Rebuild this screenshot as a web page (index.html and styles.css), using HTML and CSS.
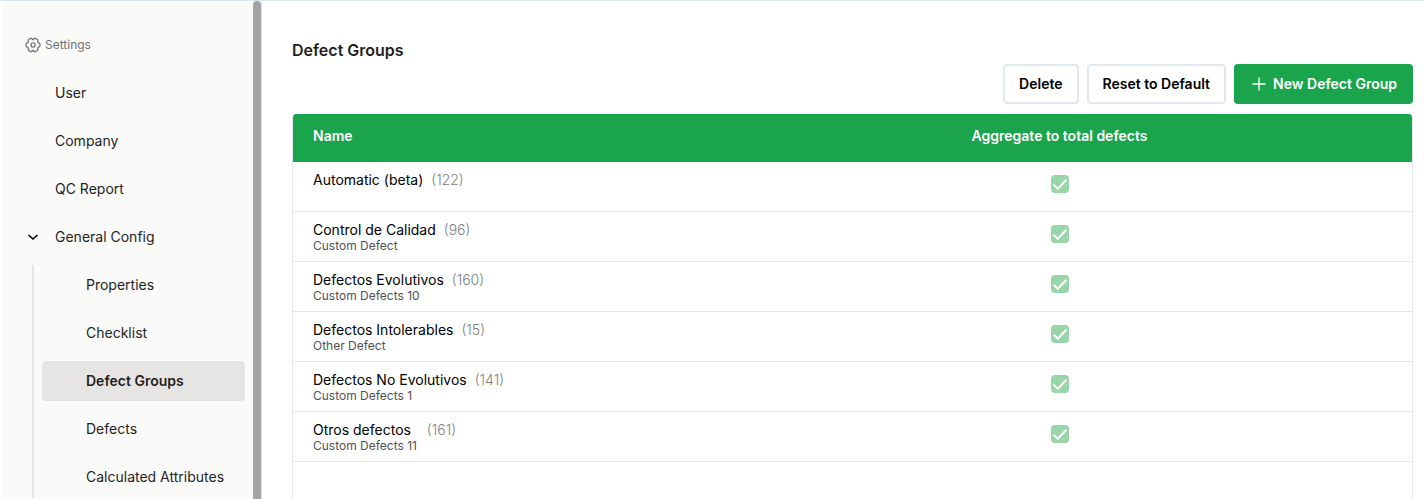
FILE: index.html
```html
<!DOCTYPE html>
<html lang="en">
<head>
<meta charset="utf-8">
<meta name="viewport" content="width=device-width, initial-scale=1">
<title>Defect Groups</title>
<link rel="stylesheet" href="styles.css">
</head>
<body>
<svg class="defs" aria-hidden="true">
  <symbol id="tick" viewBox="0 0 18 18"><path d="M2.600 9.800 6.800 13.800 15.400 4.800" fill="none" stroke="#fff" stroke-width="2"/></symbol>
</svg>
<div class="app">
  <nav class="sidebar" aria-label="Settings">
    <div class="sidebar-content">
      <div class="sidebar-title">
        <svg class="gear" viewBox="0 0 16 16" aria-hidden="true" fill="none" stroke="currentColor" stroke-width="1.3" stroke-linejoin="round">
          <path d="M8 2.700 9.300 1.500Q9.800 1.100 10.400 1.400L12.300 2.500Q12.900 2.900 12.800 3.500L12.700 5.300 14.300 6.200Q14.900 6.500 14.900 7.100V8.900Q14.900 9.500 14.300 9.800L12.700 10.700 12.800 12.500Q12.900 13.100 12.300 13.500L10.400 14.600Q9.800 14.900 9.300 14.500L8 13.300 6.700 14.500Q6.200 14.900 5.600 14.600L3.700 13.500Q3.100 13.100 3.200 12.500L3.300 10.700 1.700 9.800Q1.100 9.500 1.100 8.900V7.100Q1.100 6.500 1.700 6.200L3.300 5.300 3.200 3.500Q3.100 2.900 3.700 2.500L5.600 1.400Q6.200 1.100 6.700 1.500Z"/>
          <circle cx="8" cy="8" r="2.100"/>
        </svg>
        <span>Settings</span>
      </div>
      <ul class="menu">
        <li><a class="item" href="#user">User</a></li>
        <li><a class="item" href="#company">Company</a></li>
        <li><a class="item" href="#qc">QC Report</a></li>
        <li>
          <a class="item parent" href="#general"><svg class="chevron" viewBox="0 0 12 12" aria-hidden="true"><path d="m1.500 4 4.500 4 4.500-4" fill="none" stroke="currentColor" stroke-width="1.600"/></svg>General Config</a>
          <ul class="menu submenu">
            <li><a class="item" href="#properties">Properties</a></li>
            <li><a class="item" href="#checklist">Checklist</a></li>
            <li><a class="item active" href="#groups" aria-current="page">Defect Groups</a></li>
            <li><a class="item" href="#defects">Defects</a></li>
            <li><a class="item" href="#attributes">Calculated Attributes</a></li>
          </ul>
        </li>
      </ul>
    </div>
    <div class="scroll-thumb"></div>
  </nav>
  <main class="main">
    <h1 class="title">Defect Groups</h1>
    <div class="actions">
      <button class="btn" type="button">Delete</button>
      <button class="btn" type="button">Reset to Default</button>
      <button class="btn primary" type="button"><svg class="plus" viewBox="0 0 14 14" aria-hidden="true"><path d="M7 .5v13M.5 7h13" stroke="currentColor" stroke-width="1.300"/></svg>New Defect Group</button>
    </div>
    <div class="panel">
      <table class="groups">
        <thead><tr><th class="name-col" scope="col">Name</th><th class="total-col" scope="col">Aggregate to total defects</th></tr></thead>
        <tbody>
          <tr><td><div class="name">Automatic (beta)<span class="count">(122)</span></div></td><td><label class="check"><input type="checkbox" checked disabled aria-label="Aggregate Automatic (beta)"><svg><use href="#tick"/></svg></label></td></tr>
          <tr><td><div class="name">Control de Calidad<span class="count">(96)</span></div><div class="sub">Custom Defect</div></td><td><label class="check"><input type="checkbox" checked disabled aria-label="Aggregate Control de Calidad"><svg><use href="#tick"/></svg></label></td></tr>
          <tr><td><div class="name">Defectos Evolutivos<span class="count">(160)</span></div><div class="sub">Custom Defects 10</div></td><td><label class="check"><input type="checkbox" checked disabled aria-label="Aggregate Defectos Evolutivos"><svg><use href="#tick"/></svg></label></td></tr>
          <tr><td><div class="name">Defectos Intolerables<span class="count">(15)</span></div><div class="sub">Other Defect</div></td><td><label class="check"><input type="checkbox" checked disabled aria-label="Aggregate Defectos Intolerables"><svg><use href="#tick"/></svg></label></td></tr>
          <tr><td><div class="name">Defectos No Evolutivos<span class="count">(141)</span></div><div class="sub">Custom Defects 1</div></td><td><label class="check"><input type="checkbox" checked disabled aria-label="Aggregate Defectos No Evolutivos"><svg><use href="#tick"/></svg></label></td></tr>
          <tr><td><div class="name">Otros defectos&nbsp; <span class="count">(161)</span></div><div class="sub">Custom Defects 11</div></td><td><label class="check"><input type="checkbox" checked disabled aria-label="Aggregate Otros defectos"><svg><use href="#tick"/></svg></label></td></tr>
        </tbody>
      </table>
    </div>
  </main>
</div>
</body>
</html>
```
FILE: styles.css
```css
* { box-sizing: border-box; }
body { margin: 0; background: #fff; color: #1f1f1f; font: 14px/20px Inter, Roboto, sans-serif; }
.defs { display: none; }
.app { display: flex; height: 100vh; overflow: hidden; padding-left: 3px; border-top: 1px solid #dfe6f0; }

.sidebar { display: flex; flex: none; width: 259px; background: #fafaf9; border-right: 1px solid #dce3ec; }
.sidebar-content { flex: 1; overflow: hidden; padding-top: 24px; }
.scroll-thumb { width: 8px; margin-bottom: -8px; border-radius: 4px; background: #a3a3a3; }
.sidebar-title { display: flex; align-items: center; gap: 4px; height: 40px; margin-bottom: 8px; padding-left: 22px; color: #737373; font-size: 12px; }
.gear { width: 16px; height: 16px; }
.menu { display: grid; gap: 8px; margin: 0; padding: 0; list-style: none; }
.item { display: flex; align-items: center; height: 40px; margin-right: 8px; padding-left: 52px; border-radius: 4px; color: inherit; text-decoration: none; }
.parent { gap: 16px; padding-left: 24px; color: #1f1f1f; }
.chevron { width: 12px; height: 12px; color: #000; }
.submenu { margin: 8px 0 0 29px; padding: 0 0 8px 8px; border-left: 2px solid #e5e5e5; }
.submenu .item { padding-left: 44px; }
.submenu .active { background: #e7e5e4; font-weight: 600; }

.main { display: flex; flex: 1; flex-direction: column; min-width: 0; padding: 37px 11px 0 30px; }
.title { margin: 0 0 2px; font-size: 16px; line-height: 24px; font-weight: 600; }
.actions { display: flex; justify-content: flex-end; gap: 8px; margin-bottom: 10px; }
.btn { display: flex; align-items: center; height: 40px; padding: 0 14px; border: 2px solid #e2e8f0; border-radius: 4px; background: #fff; color: #000; font: inherit; font-weight: 600; }
.primary { gap: 7px; padding-left: 16px; border-color: #1aa44c; background: #1aa44c; color: #fff; }
.plus { width: 14px; height: 14px; }

.panel { flex: 1; border: solid #e2e8f0; border-width: 0 1px; border-radius: 4px 4px 0 0; overflow: hidden; }
.groups { width: 100%; border-collapse: separate; border-spacing: 0; table-layout: fixed; }
.groups th { height: 48px; padding: 12px 20px 0; background: #1aa44c; color: #fff; font-weight: 600; line-height: 20px; text-align: left; vertical-align: top; }
.name-col { width: 37%; }
.groups .total-col { width: 63%; text-align: center; }
.groups td { height: 50px; padding: 10px 20px 0; border-bottom: 1px solid #e2e8f0; vertical-align: top; }
.name { color: #000; line-height: 16px; }
.count { margin-left: 8px; color: #808080; font-weight: 300; }
.sub { color: #525252; font-size: 12px; line-height: 16px; }
.check { display: grid; width: 18px; height: 18px; margin: 3px auto 0; }
.check input, .check svg { grid-area: 1 / 1; width: 18px; height: 18px; margin: 0; }
.check input { appearance: none; border-radius: 4px; background: #98d5a9; }
```
